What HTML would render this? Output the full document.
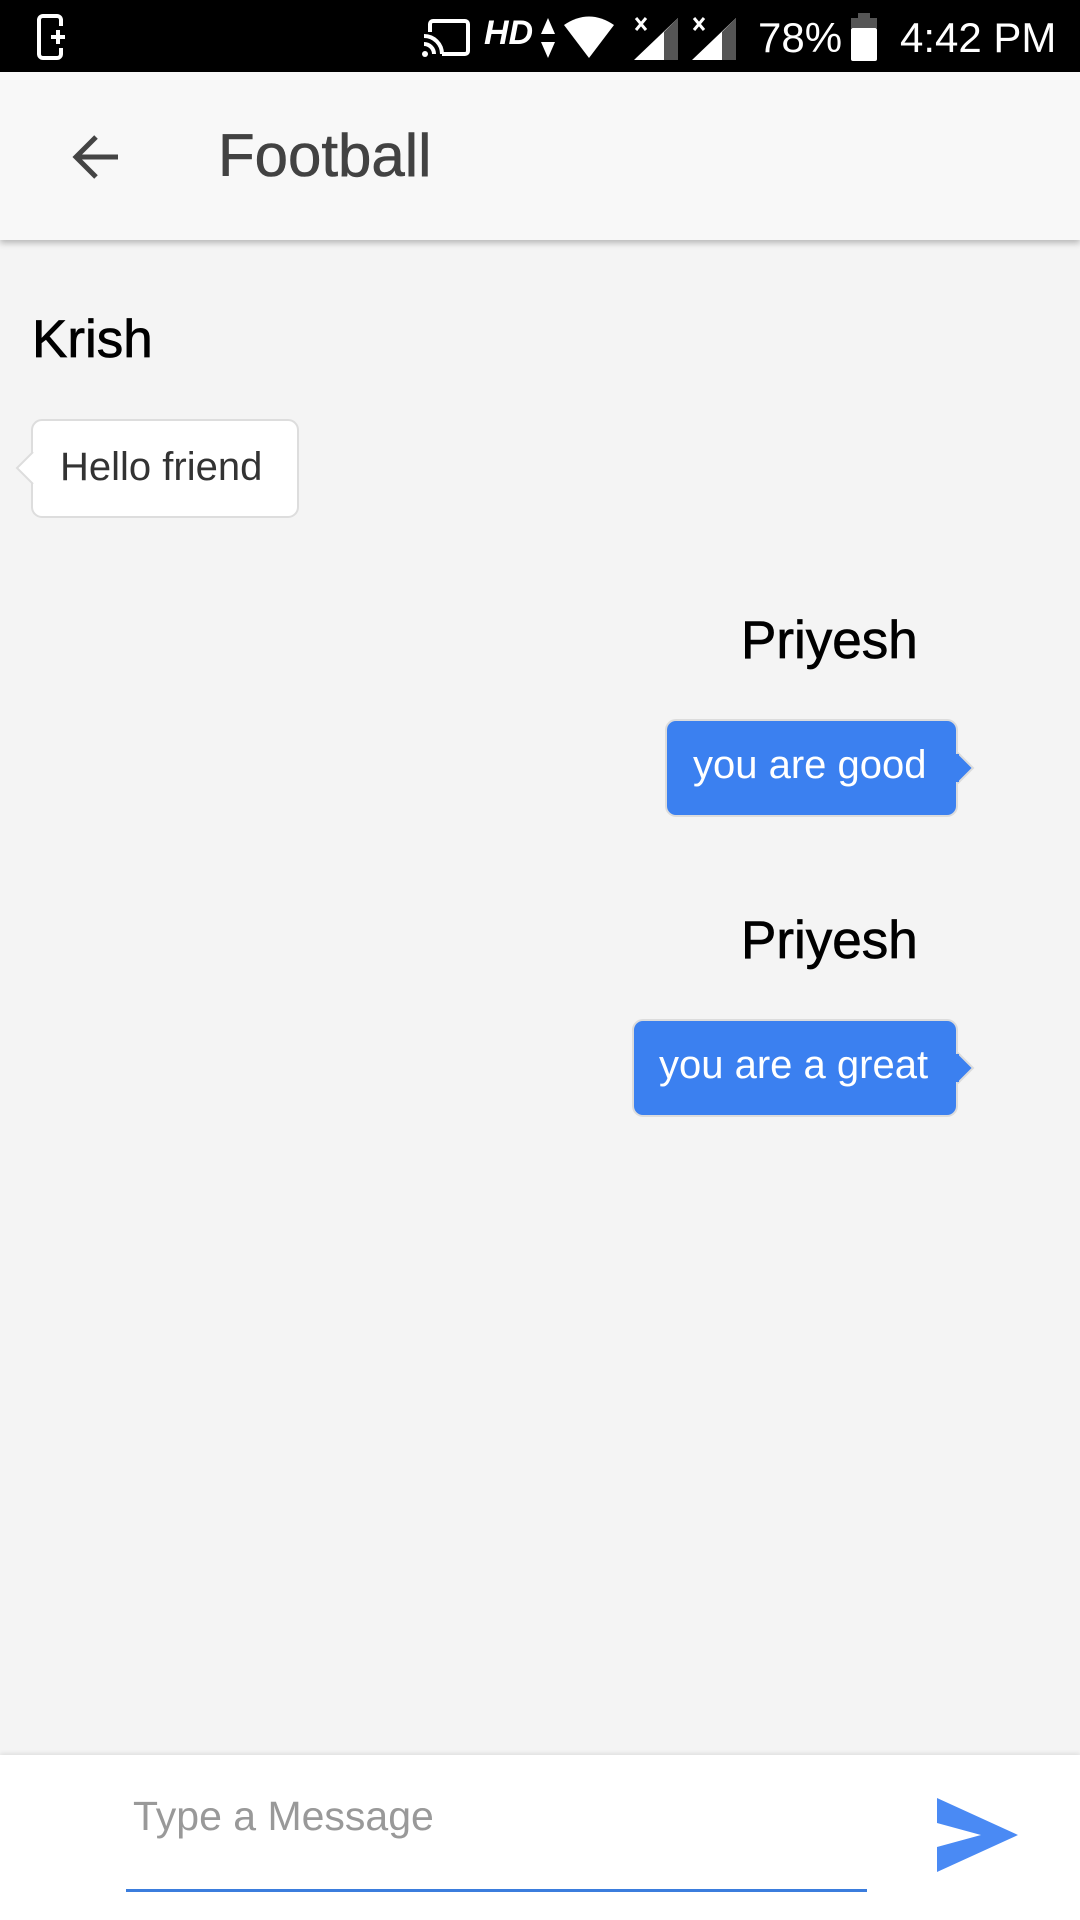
<!DOCTYPE html>
<html><head><meta charset="utf-8"><style>
*{margin:0;padding:0;box-sizing:border-box}
body{width:1080px;height:1920px;background:#f4f4f4;font-family:"Liberation Sans",Arial,sans-serif;position:relative;overflow:hidden}
.abs{position:absolute}
.sb{left:0;top:0;width:1080px;height:72px;background:#000;color:#fff}
.tb{left:0;top:72px;width:1080px;height:168px;background:#f8f8f8;box-shadow:0 3px 6px rgba(0,0,0,.25)}
.name{font-size:53px;color:#000;-webkit-text-stroke:0.7px #000;line-height:1}
.bub{border:2px solid #ddd;border-radius:11px;font-size:40px;line-height:1}
.wb{background:#fff;color:#333}
.bb{background:#3b80f0;color:#fff;border-color:#dcdcdc}
</style></head><body>
<div class="abs sb">
<svg class="abs" style="left:36px;top:14px" width="38" height="46" viewBox="0 0 38 46"><rect x="3" y="2" width="22" height="42" rx="4" fill="none" stroke="#fff" stroke-width="4"/><rect x="20" y="12" width="12" height="22" fill="#000"/><path d="M22 16v14M15 23h14" stroke="#fff" stroke-width="4"/></svg>
<svg class="abs" style="left:422px;top:18px" width="48" height="40" viewBox="0 0 48 40"><rect x="8" y="3" width="38" height="33" rx="3" fill="none" stroke="#fff" stroke-width="4"/><rect x="0" y="14" width="20" height="26" fill="#000"/><path d="M2 18a18 18 0 0 1 18 18M2 26a10 10 0 0 1 10 10" stroke="#fff" stroke-width="4" fill="none"/><circle cx="3" cy="36" r="3" fill="#fff"/></svg>
<div class="abs" style="left:484px;top:14px;font-size:34px;font-style:italic;font-weight:bold">HD</div>
<svg class="abs" style="left:540px;top:18px" width="16" height="40"><path d="M8 0l7 16H1zM8 40l7-16H1z" fill="#fff"/></svg>
<svg class="abs" style="left:564px;top:16px" width="50" height="42"><path d="M0 9Q25-8 50 9L25 42z" fill="#fff"/></svg>
<svg class="abs" style="left:634px;top:14px" width="44" height="46"><path d="M44 4V46H0z" fill="#fff"/><path d="M30 18V46H44V4z" fill="#555"/><path d="M2 4l10 12M12 4L2 16" stroke="#fff" stroke-width="3"/></svg>
<svg class="abs" style="left:692px;top:14px" width="44" height="46"><path d="M44 4V46H0z" fill="#fff"/><path d="M30 18V46H44V4z" fill="#555"/><path d="M2 4l10 12M12 4L2 16" stroke="#fff" stroke-width="3"/></svg>
<div class="abs" style="left:758px;top:14px;font-size:42px">78%</div>
<svg class="abs" style="left:851px;top:13px" width="26" height="48"><rect x="7" y="0" width="12" height="6" fill="#555"/><rect x="0" y="5" width="26" height="10" fill="#555"/><rect x="0" y="15" width="26" height="33" rx="2" fill="#fff"/></svg>
<div class="abs" style="left:900px;top:14px;font-size:42px">4:42 PM</div>
</div>
<div class="abs tb">
<svg class="abs" style="left:70px;top:59px" width="52" height="52" viewBox="0 0 52 52"><path d="M48 26H8M26 6L6 26l20 20" stroke="#444" stroke-width="5" fill="none"/></svg>
<div class="abs" style="left:218px;top:49px;font-size:60px;color:#424242;-webkit-text-stroke:0.6px #424242">Football</div>
</div>
<div class="abs name" style="left:32px;top:313px">Krish</div>
<div class="abs bub wb" style="left:31px;top:419px;width:268px;height:99px;padding:26px 0 0 27px">Hello friend</div>
<svg class="abs" style="left:15px;top:452px" width="20" height="32"><path d="M18 0L2 16l16 16" fill="#fff" stroke="#ddd" stroke-width="2"/></svg>
<div class="abs name" style="left:741px;top:614px">Priyesh</div>
<div class="abs bub bb" style="left:665px;top:719px;width:293px;height:98px;padding:24px 0 0 26px">you are good</div>
<svg class="abs" style="left:955px;top:752px" width="20" height="32"><path d="M2 0l16 16L2 32" fill="#3b80f0" stroke="#dcdcdc" stroke-width="2"/><rect x="0" y="2" width="4" height="28" fill="#3b80f0"/></svg>
<div class="abs name" style="left:741px;top:914px">Priyesh</div>
<div class="abs bub bb" style="left:632px;top:1019px;width:326px;height:98px;padding:24px 0 0 25px">you are a great</div>
<svg class="abs" style="left:955px;top:1052px" width="20" height="32"><path d="M2 0l16 16L2 32" fill="#3b80f0" stroke="#dcdcdc" stroke-width="2"/><rect x="0" y="2" width="4" height="28" fill="#3b80f0"/></svg>
<div class="abs" style="left:0;top:1755px;width:1080px;height:165px;background:#fff;box-shadow:0 -2px 4px rgba(0,0,0,.08)"></div>
<div class="abs" style="left:133px;top:1793px;font-size:41px;color:#999">Type a Message</div>
<div class="abs" style="left:126px;top:1889px;width:741px;height:3px;background:#3b7ddd"></div>
<svg class="abs" style="left:937px;top:1798px" width="82" height="74" viewBox="0 0 82 74"><path d="M0 0L81 37L0 74L0 49L44 37L0 25z" fill="#4a8af4"/></svg>
</body></html>
